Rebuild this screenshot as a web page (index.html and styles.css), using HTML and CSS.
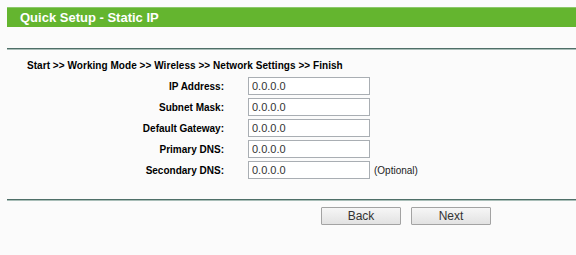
FILE: index.html
```html
<!DOCTYPE html>
<html>
<head>
<meta charset="utf-8">
<link rel="stylesheet" href="styles.css">
</head>
<body>
<div class="page">
  <div class="title">Quick Setup - Static IP</div>
  <div class="rule rule-top"></div>
  <div class="crumbs">Start &gt;&gt; Working Mode &gt;&gt; Wireless &gt;&gt; Network Settings &gt;&gt; Finish</div>
  <div class="form">
    <label class="lbl">IP Address:</label><input class="field" type="text" value="0.0.0.0"><span></span>
    <label class="lbl">Subnet Mask:</label><input class="field" type="text" value="0.0.0.0"><span></span>
    <label class="lbl">Default Gateway:</label><input class="field" type="text" value="0.0.0.0"><span></span>
    <label class="lbl">Primary DNS:</label><input class="field" type="text" value="0.0.0.0"><span></span>
    <label class="lbl">Secondary DNS:</label><input class="field" type="text" value="0.0.0.0"><span class="opt">(Optional)</span>
  </div>
  <div class="rule rule-bottom"></div>
  <div class="buttons">
    <button class="btn">Back</button>
    <button class="btn">Next</button>
  </div>
</div>
</body>
</html>
```
FILE: styles.css
```css
html, body {
  margin: 0;
  padding: 0;
  background: #fbfbfb;
}
body {
  font-family: "Liberation Sans", Arial, sans-serif;
  color: #000;
}
.page {
  width: 576px;
  height: 255px;
  overflow: hidden;
}
.title {
  margin: 7px 0 0 7px;
  height: 20px;
  line-height: 19px;
  background: #64b52f;
  border-top: 1px solid #8cc86a;
  color: #fff;
  font-weight: bold;
  font-size: 13px;
  padding-left: 13px;
  box-sizing: border-box;
}
.rule {
  margin-left: 7px;
  height: 1px;
  background: #4f6f68;
  border-bottom: 1px solid #a9beb8;
}
.rule-top {
  margin-top: 21px;
}
.crumbs {
  margin: 9px 0 0 27px;
  font-size: 10px;
  font-weight: bold;
  line-height: 13px;
  height: 13px;
  letter-spacing: 0.05px;
}
.form {
  margin-top: 5px;
  display: grid;
  grid-template-columns: 248px 122px auto;
  grid-auto-rows: 18px;
  row-gap: 3px;
  align-items: center;
}
.lbl {
  text-align: right;
  padding-right: 24px;
  font-size: 10px;
  font-weight: bold;
}
.field {
  box-sizing: border-box;
  width: 122px;
  height: 18px;
  margin: 0;
  padding: 0 3px;
  border: 1px solid #a9aeb3;
  background: #fff;
  font-family: "Liberation Sans", Arial, sans-serif;
  font-size: 11px;
  color: #333;
}
.opt {
  padding-left: 4px;
  font-size: 10px;
  color: #222;
}
.rule-bottom {
  margin-top: 20px;
}
.buttons {
  margin: 6px 0 0 321px;
  display: flex;
  gap: 10px;
}
.btn {
  box-sizing: border-box;
  width: 80px;
  height: 18px;
  margin: 0;
  padding: 0;
  border: 1px solid #a3a3a3;
  border-radius: 1px;
  background: linear-gradient(#f6f6f6, #e2e2e2);
  font-family: "Liberation Sans", Arial, sans-serif;
  font-size: 12px;
  color: #333;
}
```
